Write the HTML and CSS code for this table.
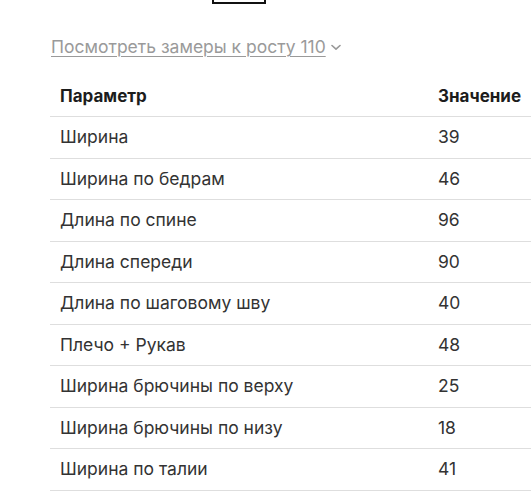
FILE: index.html
```html
<!DOCTYPE html>
<html lang="ru">
<head>
<meta charset="utf-8">
<link rel="stylesheet" href="styles.css">
</head>
<body>
<div class="page">
  <div class="sizes">
    <div class="size-btn selected"></div>
  </div>
  <a class="toggle" href="#">Посмотреть замеры к росту 110<svg class="chev" width="10" height="7" viewBox="0 0 10 7"><path d="M1 1.5 L5 5.2 L9 1.5" fill="none" stroke="#999" stroke-width="1.6" stroke-linecap="round" stroke-linejoin="round"/></svg></a>
  <table class="measures">
    <thead>
      <tr><th class="c-param">Параметр</th><th class="c-val">Значение</th></tr>
    </thead>
    <tbody>
      <tr><td>Ширина</td><td>39</td></tr>
      <tr><td>Ширина по бедрам</td><td>46</td></tr>
      <tr><td>Длина по спине</td><td>96</td></tr>
      <tr><td>Длина спереди</td><td>90</td></tr>
      <tr><td>Длина по шаговому шву</td><td>40</td></tr>
      <tr><td>Плечо + Рукав</td><td>48</td></tr>
      <tr><td>Ширина брючины по верху</td><td>25</td></tr>
      <tr><td>Ширина брючины по низу</td><td>18</td></tr>
      <tr><td>Ширина по талии</td><td>41</td></tr>
    </tbody>
  </table>
</div>
</body>
</html>
```
FILE: styles.css
```css
html, body {
  margin: 0;
  padding: 0;
  background: #fff;
  overflow: hidden;
}
body {
  font-family: Inter, "Noto Sans", sans-serif;
  color: #222;
}
.page {
  padding-left: 50px;
  width: 540px;
}
.sizes {
  display: flex;
  padding-left: 162px;
}
.size-btn {
  width: 50px;
  height: 2px;
  border: 2px solid #111;
  border-top: none;
  flex: none;
}
.toggle {
  display: inline-flex;
  align-items: center;
  margin-top: 32px;
  margin-left: 1px;
  font-size: 17.5px;
  line-height: 22px;
  color: #9a9a9a;
  text-decoration: underline;
  text-decoration-thickness: 1px;
  text-underline-offset: 3px;
}
.chev {
  margin-left: 5px;
  text-decoration: none;
}
.measures {
  border-collapse: collapse;
  margin-top: 17.5px;
  width: 540px;
  font-size: 17.5px;
}
.measures th, .measures td {
  text-align: left;
  padding: 8.25px 10px;
  line-height: 24px;
  border-bottom: 1px solid #dedede;
}
.measures th {
  font-size: 17px;
  font-weight: 700;
  color: #1c1c1c;
}
.measures td {
  color: #333;
}
.c-param {
  width: 358px;
}
```
